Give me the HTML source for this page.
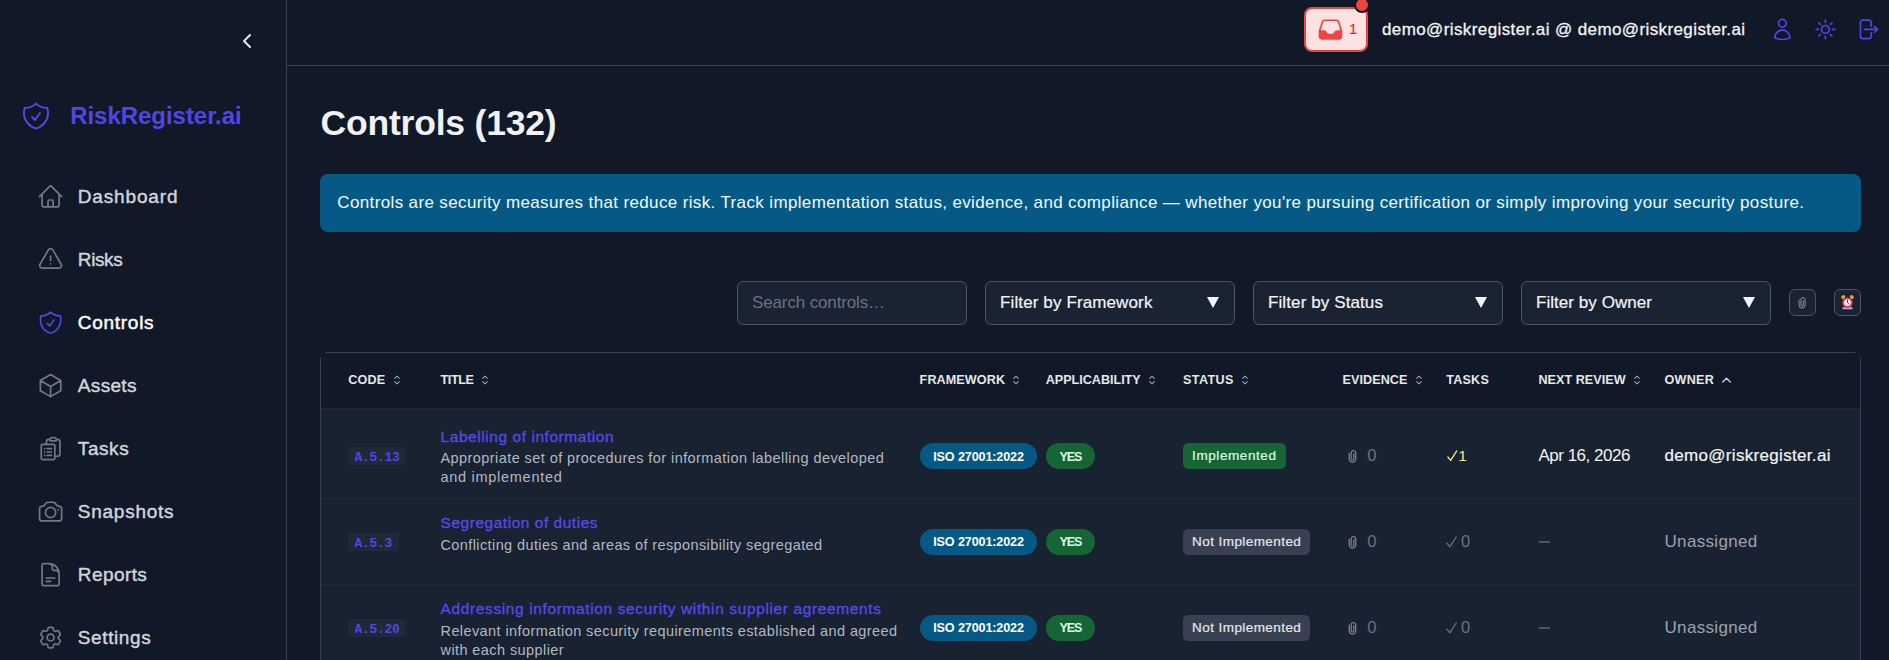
<!DOCTYPE html>
<html lang="en">
<head>
<meta charset="utf-8">
<title>Controls - RiskRegister.ai</title>
<style>
*{box-sizing:border-box;margin:0;padding:0}
html,body{width:1889px;height:660px;overflow:hidden;background:#111827}
body{position:relative;font-family:"Liberation Sans",sans-serif;color:#f3f4f6}
.a{position:absolute;white-space:pre;line-height:1;display:block}
svg{display:block;overflow:visible}
.ico{position:absolute;fill:none;stroke-linecap:round;stroke-linejoin:round}
#side{position:absolute;left:0;top:0;width:287px;height:660px;border-right:1px solid #374151}
#top{position:absolute;left:287px;top:0;width:1602px;height:66px;border-bottom:1px solid #374151}
#inbox{position:absolute;left:1304px;top:7px;width:64px;height:45px;border:2px solid #ef4444;border-radius:8px;background:#fee2e2}
#dot{position:absolute;left:1353.5px;top:-2.8px;width:16px;height:16px;border-radius:50%;background:#ef4444;border:2px solid #111827}
#banner{position:absolute;left:320px;top:174px;width:1541px;height:58px;border-radius:8px;background:#075985}
.inp{position:absolute;top:281px;height:44px;border:1px solid #4b5563;border-radius:6px;background:#192331}
.inp i{position:absolute;right:14.6px;top:15.3px;width:0;height:0;border-left:6.2px solid transparent;border-right:6.2px solid transparent;border-top:11.6px solid #f3f4f6}
.sbtn{position:absolute;top:289px;width:27px;height:27px;border:1px solid #4b5563;border-radius:6px;background:#192331}
#rows{position:absolute;left:321px;top:408px;width:1539px;height:260px;background:#182231}
.bl{position:absolute;background:#374151}
.sep{position:absolute;left:321px;width:1539px;height:1px;background:#202a3a}
.srt{position:absolute;top:375.2px;width:6px;height:10px;fill:none;stroke:#9ca3af;stroke-width:1.1;stroke-linecap:round;stroke-linejoin:round}
.code{position:absolute;left:348.3px;height:18.6px;border-radius:4px;background:#1f2937}
.pill{position:absolute;height:26px;border-radius:13px}
.iso{left:919.6px;width:117.4px;background:#075985}
.yes{left:1045.7px;width:49.5px;background:#166534}
.st{position:absolute;left:1183px;height:26.2px;border-radius:5.5px}
.st.imp{background:#166534}
.st.not{background:#374151}
</style>
</head>
<body>
<div id="side"></div><div id="top"></div>
<svg class="ico" style="left:235.40px;top:29.30px;width:24px;height:24px;stroke:#e5e7eb;stroke-width:2" viewBox="0 0 24 24"><path d="M15 18l-6-6 6-6"/></svg>
<svg class="ico" style="left:20.00px;top:99.90px;width:32px;height:32px;stroke:#4f46e5;stroke-width:1.5" viewBox="0 0 24 24"><path d="M9 12.75L11.25 15 15 9.75m-3-7.036A11.959 11.959 0 013.598 6 11.99 11.99 0 003 9.749c0 5.592 3.824 10.29 9 11.623 5.176-1.332 9-6.03 9-11.622 0-1.31-.21-2.571-.598-3.751h-.152c-3.196 0-6.1-1.248-8.25-3.285z"/></svg>
<span class="a" style="left:70.20px;top:104.00px;font-size:24px;color:#4f46e5;font-weight:700;letter-spacing:-0.040px;">RiskRegister.ai</span>
<svg class="ico" style="left:36.90px;top:182.70px;width:27.2px;height:27.2px;stroke:#717888;stroke-width:1.5" viewBox="0 0 24 24"><path d="M2.25 12l8.954-8.955c.44-.439 1.152-.439 1.591 0L21.75 12M4.5 9.75v10.125c0 .621.504 1.125 1.125 1.125H9.75v-4.875c0-.621.504-1.125 1.125-1.125h2.25c.621 0 1.125.504 1.125 1.125V21h4.125c.621 0 1.125-.504 1.125-1.125V9.75M8.25 21h8.25"/></svg>
<span class="a" style="left:77.80px;top:187.00px;font-size:19px;color:#d1d5db;letter-spacing:0.839px;-webkit-text-stroke:0.42px #d1d5db;">Dashboard</span>
<svg class="ico" style="left:36.90px;top:245.70px;width:27.2px;height:27.2px;stroke:#717888;stroke-width:1.5" viewBox="0 0 24 24"><path d="M12 9v3.75m-9.303 3.376c-.866 1.5.217 3.374 1.948 3.374h14.71c1.73 0 2.813-1.874 1.948-3.374L13.949 3.378c-.866-1.5-3.032-1.5-3.898 0L2.697 16.126zM12 15.75h.007v.008H12v-.008z"/></svg>
<span class="a" style="left:77.80px;top:250.00px;font-size:19px;color:#d1d5db;letter-spacing:-0.391px;-webkit-text-stroke:0.42px #d1d5db;">Risks</span>
<svg class="ico" style="left:36.90px;top:308.70px;width:27.2px;height:27.2px;stroke:#4f46e5;stroke-width:1.5" viewBox="0 0 24 24"><path d="M9 12.75L11.25 15 15 9.75m-3-7.036A11.959 11.959 0 013.598 6 11.99 11.99 0 003 9.749c0 5.592 3.824 10.29 9 11.623 5.176-1.332 9-6.03 9-11.622 0-1.31-.21-2.571-.598-3.751h-.152c-3.196 0-6.1-1.248-8.25-3.285z"/></svg>
<span class="a" style="left:77.80px;top:313.00px;font-size:19px;color:#f9fafb;letter-spacing:0.719px;-webkit-text-stroke:0.5px #f9fafb;">Controls</span>
<svg class="ico" style="left:36.90px;top:371.70px;width:27.2px;height:27.2px;stroke:#717888;stroke-width:1.5" viewBox="0 0 24 24"><path d="M21 7.5l-9-5.25L3 7.5m18 0l-9 5.25m9-5.25v9l-9 5.25M3 7.5l9 5.25M3 7.5v9l9 5.25m0-9v9"/></svg>
<span class="a" style="left:77.80px;top:376.00px;font-size:19px;color:#d1d5db;letter-spacing:0.328px;-webkit-text-stroke:0.42px #d1d5db;">Assets</span>
<svg class="ico" style="left:36.90px;top:434.70px;width:27.2px;height:27.2px;stroke:#717888;stroke-width:1.5" viewBox="0 0 24 24"><path d="M9 12h3.75M9 15h3.75M9 18h3.75m3 .75H18a2.25 2.25 0 002.25-2.25V6.108c0-1.135-.845-2.098-1.976-2.192a48.424 48.424 0 00-1.123-.08m-5.801 0c-.065.21-.1.433-.1.664 0 .414.336.75.75.75h4.5a.75.75 0 00.75-.75 2.25 2.25 0 00-.1-.664m-5.8 0A2.251 2.251 0 0113.5 2.25H15c1.012 0 1.867.668 2.15 1.586m-5.8 0c-.376.023-.75.05-1.124.08C9.095 4.01 8.25 4.973 8.25 6.108V8.25m0 0H4.875c-.621 0-1.125.504-1.125 1.125v11.25c0 .621.504 1.125 1.125 1.125h9.75c.621 0 1.125-.504 1.125-1.125V9.375c0-.621-.504-1.125-1.125-1.125H8.25zM6.75 12h.008v.008H6.75V12zm0 3h.008v.008H6.75V15zm0 3h.008v.008H6.75V18z"/></svg>
<span class="a" style="left:77.80px;top:439.00px;font-size:19px;color:#d1d5db;letter-spacing:0.584px;-webkit-text-stroke:0.42px #d1d5db;">Tasks</span>
<svg class="ico" style="left:36.90px;top:497.70px;width:27.2px;height:27.2px;stroke:#717888;stroke-width:1.5" viewBox="0 0 24 24"><path d="M6.827 6.175A2.31 2.31 0 015.186 7.23c-.38.054-.757.112-1.134.175C2.999 7.58 2.25 8.507 2.25 9.574V18a2.25 2.25 0 002.25 2.25h15A2.25 2.25 0 0021.75 18V9.574c0-1.067-.75-1.994-1.802-2.169a47.865 47.865 0 00-1.134-.175 2.31 2.31 0 01-1.64-1.055l-.822-1.316a2.192 2.192 0 00-1.736-1.039 48.774 48.774 0 00-5.232 0 2.192 2.192 0 00-1.736 1.039l-.821 1.316z M16.5 12.75a4.5 4.5 0 11-9 0 4.5 4.5 0 019 0zM18.75 10.5h.008v.008h-.008V10.5z"/></svg>
<span class="a" style="left:77.80px;top:502.00px;font-size:19px;color:#d1d5db;letter-spacing:0.745px;-webkit-text-stroke:0.42px #d1d5db;">Snapshots</span>
<svg class="ico" style="left:36.90px;top:560.70px;width:27.2px;height:27.2px;stroke:#717888;stroke-width:1.5" viewBox="0 0 24 24"><path d="M19.5 14.25v-2.625a3.375 3.375 0 00-3.375-3.375h-1.5A1.125 1.125 0 0113.5 7.125v-1.5a3.375 3.375 0 00-3.375-3.375H8.25m0 12.75h7.5m-7.5 3H12M10.5 2.25H5.625c-.621 0-1.125.504-1.125 1.125v17.25c0 .621.504 1.125 1.125 1.125h12.75c.621 0 1.125-.504 1.125-1.125V11.25a9 9 0 00-9-9z"/></svg>
<span class="a" style="left:77.80px;top:565.00px;font-size:19px;color:#d1d5db;letter-spacing:0.424px;-webkit-text-stroke:0.42px #d1d5db;">Reports</span>
<svg class="ico" style="left:36.90px;top:623.70px;width:27.2px;height:27.2px;stroke:#717888;stroke-width:1.5" viewBox="0 0 24 24"><path d="M9.594 3.94c.09-.542.56-.94 1.11-.94h2.593c.55 0 1.02.398 1.11.94l.213 1.281c.063.374.313.686.645.87.074.04.147.083.22.127.324.196.72.257 1.075.124l1.217-.456a1.125 1.125 0 011.37.49l1.296 2.247a1.125 1.125 0 01-.26 1.431l-1.003.827c-.293.24-.438.613-.431.992a6.759 6.759 0 010 .255c-.007.378.138.75.43.99l1.005.828c.424.35.534.954.26 1.43l-1.298 2.247a1.125 1.125 0 01-1.369.491l-1.217-.456c-.355-.133-.75-.072-1.076.124a6.57 6.57 0 01-.22.128c-.331.183-.581.495-.644.869l-.213 1.28c-.09.543-.56.941-1.11.941h-2.594c-.55 0-1.02-.398-1.11-.94l-.213-1.281c-.062-.374-.312-.686-.644-.87a6.52 6.52 0 01-.22-.127c-.325-.196-.72-.257-1.076-.124l-1.217.456a1.125 1.125 0 01-1.369-.49l-1.297-2.247a1.125 1.125 0 01.26-1.431l1.004-.827c.292-.24.437-.613.43-.992a6.932 6.932 0 010-.255c.007-.378-.138-.75-.43-.99l-1.004-.828a1.125 1.125 0 01-.26-1.43l1.297-2.247a1.125 1.125 0 011.37-.491l1.216.456c.356.133.751.072 1.076-.124.072-.044.146-.087.22-.128.332-.183.582-.495.644-.869l.214-1.281z M15 12a3 3 0 11-6 0 3 3 0 016 0z"/></svg>
<span class="a" style="left:77.80px;top:628.00px;font-size:19px;color:#d1d5db;letter-spacing:0.605px;-webkit-text-stroke:0.42px #d1d5db;">Settings</span>
<div id="inbox"></div><div id="dot"></div>
<svg class="ico" style="left:1317px;top:15.9px;width:27px;height:27px;fill:#ef4444;stroke:none" viewBox="0 0 24 24"><path fill-rule="evenodd" clip-rule="evenodd" d="M6.912 3a3 3 0 00-2.868 2.118l-2.411 7.838a3 3 0 00-.133.882V18a3 3 0 003 3h15a3 3 0 003-3v-4.162c0-.299-.045-.596-.133-.882l-2.412-7.838A3 3 0 0017.088 3H6.912zm13.823 9.75l-2.213-7.191A1.5 1.5 0 0017.088 4.5H6.912a1.5 1.5 0 00-1.434 1.059L3.265 12.75H6.11a3 3 0 012.684 1.658l.256.513a1.5 1.5 0 001.342.829h3.218a1.5 1.5 0 001.342-.83l.256-.512a3 3 0 012.684-1.658h2.844z"/></svg>
<span class="a" style="left:1349.30px;top:22.00px;font-size:14px;color:#dc2626;letter-spacing:-1.297px;-webkit-text-stroke:0.2px #dc2626;">1</span>
<span class="a" style="left:1382.00px;top:21.00px;font-size:17px;color:#f3f4f6;letter-spacing:0.394px;-webkit-text-stroke:0.3px #f3f4f6;">demo@riskregister.ai @ demo@riskregister.ai</span>
<svg class="ico" style="left:1770.00px;top:16.70px;width:24.8px;height:24.8px;stroke:#4f46e5;stroke-width:1.6" viewBox="0 0 24 24"><path d="M15.75 6a3.75 3.75 0 11-7.5 0 3.75 3.75 0 017.5 0zM4.501 20.118a7.5 7.5 0 0114.998 0A17.933 17.933 0 0112 21.75c-2.676 0-5.216-.584-7.499-1.632z"/></svg>
<svg class="ico" style="left:1812.70px;top:16.80px;width:24.8px;height:24.8px;stroke:#4f46e5;stroke-width:1.6" viewBox="0 0 24 24"><path d="M12 3v2.25m6.364.386l-1.591 1.591M21 12h-2.25m-.386 6.364l-1.591-1.591M12 18.75V21m-4.773-4.227l-1.591 1.591M5.25 12H3m4.227-4.773L5.636 5.636M15.75 12a3.75 3.75 0 11-7.5 0 3.75 3.75 0 017.5 0z"/></svg>
<svg class="ico" style="left:1855.40px;top:16.80px;width:24.8px;height:24.8px;stroke:#4f46e5;stroke-width:1.6" viewBox="0 0 24 24"><path d="M15.75 9V5.25A2.25 2.25 0 0013.5 3h-6a2.25 2.25 0 00-2.25 2.25v13.5A2.25 2.25 0 007.5 21h6a2.25 2.25 0 002.25-2.25V15m3 0l3-3m0 0l-3-3m3 3H9"/></svg>
<span class="a" style="left:320.50px;top:106.00px;font-size:35.5px;color:#eff1f4;font-weight:700;letter-spacing:-0.191px;">Controls (132)</span>
<div id="banner"></div>
<span class="a" style="left:337.30px;top:194.00px;font-size:17px;color:#f0f9ff;letter-spacing:0.364px;">Controls are security measures that reduce risk. Track implementation status, evidence, and compliance — whether you&#x27;re pursuing certification or simply improving your security posture.</span>
<div class="inp" style="left:737px;width:230px"></div>
<span class="a" style="left:752.00px;top:294.00px;font-size:17px;color:#6b7280;letter-spacing:-0.133px;">Search controls…</span>
<div class="inp" style="left:985px;width:250px"><i></i></div>
<span class="a" style="left:1000.00px;top:294.00px;font-size:17px;color:#f3f4f6;letter-spacing:0.122px;-webkit-text-stroke:0.2px #f3f4f6;">Filter by Framework</span>
<div class="inp" style="left:1253px;width:250px"><i></i></div>
<span class="a" style="left:1268.00px;top:294.00px;font-size:17px;color:#f3f4f6;letter-spacing:0.102px;-webkit-text-stroke:0.2px #f3f4f6;">Filter by Status</span>
<div class="inp" style="left:1521px;width:250px"><i></i></div>
<span class="a" style="left:1536.00px;top:294.00px;font-size:17px;color:#f3f4f6;letter-spacing:0.050px;-webkit-text-stroke:0.2px #f3f4f6;">Filter by Owner</span>
<div class="sbtn" style="left:1789px"></div><div class="sbtn" style="left:1834px"></div>
<svg class="ico" style="left:1798.4px;top:295.6px;width:8.2px;height:13.4px;stroke:#c3c4cb;stroke-width:.85" viewBox="0 0 10 16"><path d="M1.3 4.6V11a3.7 3.7 0 007.4 0V4.3a2.6 2.6 0 00-5.2 0v6.5a1.5 1.5 0 003 0V5.2"/><circle cx="2.6" cy="4.4" r=".75" fill="#7a3b2e" stroke="none"/><circle cx="6.3" cy="5" r=".75" fill="#7a3b2e" stroke="none"/></svg>
<svg class="ico" style="left:1841.4px;top:294.8px;width:13px;height:14.4px;stroke:none" viewBox="0 0 13 14.4"><ellipse cx="2.2" cy="2" rx="2.1" ry="1.7" fill="#f5a524" transform="rotate(-35 2.2 2)"/><ellipse cx="10.8" cy="2" rx="2.1" ry="1.7" fill="#f5a524" transform="rotate(35 10.8 2)"/><rect x="1.3" y="12.2" width="10.4" height="2" rx="1" fill="#c6a4e0"/><circle cx="6.5" cy="7.6" r="5.2" fill="#ef3a63"/><circle cx="6.5" cy="7.6" r="3.4" fill="#fdf4f6"/><path d="M6.5 5.3V7.7L7.9 9" fill="none" stroke="#6b2338" stroke-width="1" stroke-linecap="round" stroke-linejoin="round"/></svg>
<div id="rows"></div>
<div class="bl" style="left:326px;top:352px;width:1529px;height:1px"></div><div class="bl" style="left:325px;top:352px;width:1531px;height:1px;opacity:.45"></div><div class="bl" style="left:320px;top:358px;width:1px;height:310px"></div><div class="bl" style="left:1860px;top:358px;width:1px;height:310px"></div><div class="bl" style="left:320px;top:357px;width:1px;height:1px;opacity:.5"></div><div class="bl" style="left:1860px;top:357px;width:1px;height:1px;opacity:.5"></div>
<div class="sep" style="top:408px"></div><div class="sep" style="top:498px"></div><div class="sep" style="top:584px"></div>
<span class="a" style="left:348.20px;top:374.00px;font-size:12.6px;color:#e5e7eb;font-weight:700;letter-spacing:0.202px;">CODE</span>
<svg class="srt" style="left:393.6px" viewBox="0 0 6 10"><path d="M.7 3.4L3 1.1l2.3 2.3M.7 6.6L3 8.9l2.3-2.3"/></svg>
<span class="a" style="left:440.50px;top:374.00px;font-size:12.6px;color:#e5e7eb;font-weight:700;letter-spacing:-0.397px;">TITLE</span>
<svg class="srt" style="left:481.7px" viewBox="0 0 6 10"><path d="M.7 3.4L3 1.1l2.3 2.3M.7 6.6L3 8.9l2.3-2.3"/></svg>
<span class="a" style="left:919.60px;top:374.00px;font-size:12.6px;color:#e5e7eb;font-weight:700;letter-spacing:0.094px;">FRAMEWORK</span>
<svg class="srt" style="left:1013.3px" viewBox="0 0 6 10"><path d="M.7 3.4L3 1.1l2.3 2.3M.7 6.6L3 8.9l2.3-2.3"/></svg>
<span class="a" style="left:1045.70px;top:374.00px;font-size:12.6px;color:#e5e7eb;font-weight:700;letter-spacing:-0.012px;">APPLICABILITY</span>
<svg class="srt" style="left:1148.9px" viewBox="0 0 6 10"><path d="M.7 3.4L3 1.1l2.3 2.3M.7 6.6L3 8.9l2.3-2.3"/></svg>
<span class="a" style="left:1182.90px;top:374.00px;font-size:12.6px;color:#e5e7eb;font-weight:700;letter-spacing:0.414px;">STATUS</span>
<svg class="srt" style="left:1242.1px" viewBox="0 0 6 10"><path d="M.7 3.4L3 1.1l2.3 2.3M.7 6.6L3 8.9l2.3-2.3"/></svg>
<span class="a" style="left:1342.50px;top:374.00px;font-size:12.6px;color:#e5e7eb;font-weight:700;letter-spacing:0.076px;">EVIDENCE</span>
<svg class="srt" style="left:1415.7px" viewBox="0 0 6 10"><path d="M.7 3.4L3 1.1l2.3 2.3M.7 6.6L3 8.9l2.3-2.3"/></svg>
<span class="a" style="left:1446.30px;top:374.00px;font-size:12.6px;color:#e5e7eb;font-weight:700;letter-spacing:0.190px;">TASKS</span>
<span class="a" style="left:1538.40px;top:374.00px;font-size:12.6px;color:#e5e7eb;font-weight:700;letter-spacing:0.047px;">NEXT REVIEW</span>
<svg class="srt" style="left:1633.9px" viewBox="0 0 6 10"><path d="M.7 3.4L3 1.1l2.3 2.3M.7 6.6L3 8.9l2.3-2.3"/></svg>
<span class="a" style="left:1664.50px;top:374.00px;font-size:12.6px;color:#e5e7eb;font-weight:700;letter-spacing:0.244px;">OWNER</span>
<svg class="srt" style="left:1721.7px;top:377px;width:9px;height:6px;stroke:#d1d5db;stroke-width:1.3" viewBox="0 0 9 6"><path d="M.7 5L4.5 1.2 8.3 5"/></svg>
<div class="code" style="top:446.9px;width:58.0px"></div>
<span class="a" style="left:354.60px;top:451.00px;font-size:13px;color:#5046e5;font-weight:700;font-family:'Liberation Mono',monospace;letter-spacing:-0.302px;">A.5.13</span>
<span class="a" style="left:440.60px;top:429.00px;font-size:15.5px;color:#544aea;letter-spacing:0.555px;-webkit-text-stroke:0.3px #544aea;">Labelling of information</span>
<span class="a" style="left:440.50px;top:451.00px;font-size:14.5px;color:#b3b8c1;letter-spacing:0.427px;">Appropriate set of procedures for information labelling developed</span>
<span class="a" style="left:440.50px;top:470.00px;font-size:14.5px;color:#b3b8c1;letter-spacing:0.717px;">and implemented</span>
<div class="pill iso" style="top:443.2px"></div>
<span class="a" style="left:933.20px;top:451.00px;font-size:12.6px;color:#ffffff;font-weight:700;letter-spacing:-0.124px;">ISO 27001:2022</span>
<div class="pill yes" style="top:443.2px"></div>
<span class="a" style="left:1059.40px;top:451.00px;font-size:12.6px;color:#dcfce7;font-weight:700;letter-spacing:-1.068px;">YES</span>
<div class="st imp" style="top:443.0px;width:103.2px"></div>
<span class="a" style="left:1192.10px;top:449.00px;font-size:13.5px;color:#dcfce7;letter-spacing:0.578px;-webkit-text-stroke:0.2px #dcfce7;">Implemented</span>
<svg class="ico" style="left:1347.8px;top:448.9px;width:9px;height:14.4px;stroke:#c3c4cb;stroke-width:.85" viewBox="0 0 10 16"><path d="M1.3 4.6V11a3.7 3.7 0 007.4 0V4.3a2.6 2.6 0 00-5.2 0v6.5a1.5 1.5 0 003 0V5.2"/><circle cx="2.6" cy="4.4" r=".75" fill="#7a3b2e" stroke="none"/><circle cx="6.3" cy="5" r=".75" fill="#7a3b2e" stroke="none"/></svg>
<span class="a" style="left:1367.20px;top:447.00px;font-size:16.5px;color:#6b7280;letter-spacing:-0.588px;">0</span>
<svg class="ico" style="left:1446.8px;top:449.8px;width:10.5px;height:11.5px;stroke:#fde68a;stroke-width:1.4" viewBox="0 0 11 12"><path d="M.9 7.2l2.9 3.6L10.2 1"/></svg>
<span class="a" style="left:1458.20px;top:448.00px;font-size:15.5px;color:#fde68a;letter-spacing:-1.125px;">1</span>
<span class="a" style="left:1538.40px;top:447.00px;font-size:17px;color:#f3f4f6;letter-spacing:-0.480px;">Apr 16, 2026</span>
<span class="a" style="left:1664.50px;top:447.00px;font-size:17px;color:#f3f4f6;letter-spacing:0.318px;-webkit-text-stroke:0.2px #f3f4f6;">demo@riskregister.ai</span>
<div class="code" style="top:532.7px;width:50.5px"></div>
<span class="a" style="left:354.60px;top:537.00px;font-size:13px;color:#5046e5;font-weight:700;font-family:'Liberation Mono',monospace;letter-spacing:-0.303px;">A.5.3</span>
<span class="a" style="left:440.60px;top:515.00px;font-size:15.5px;color:#544aea;letter-spacing:0.524px;-webkit-text-stroke:0.3px #544aea;">Segregation of duties</span>
<span class="a" style="left:440.50px;top:538.00px;font-size:14.5px;color:#b3b8c1;letter-spacing:0.395px;">Conflicting duties and areas of responsibility segregated</span>
<div class="pill iso" style="top:529.0px"></div>
<span class="a" style="left:933.20px;top:536.00px;font-size:12.6px;color:#ffffff;font-weight:700;letter-spacing:-0.124px;">ISO 27001:2022</span>
<div class="pill yes" style="top:529.0px"></div>
<span class="a" style="left:1059.40px;top:536.00px;font-size:12.6px;color:#dcfce7;font-weight:700;letter-spacing:-1.068px;">YES</span>
<div class="st not" style="top:528.8px;width:127px"></div>
<span class="a" style="left:1192.10px;top:535.00px;font-size:13.5px;color:#e5e7eb;letter-spacing:0.426px;-webkit-text-stroke:0.2px #e5e7eb;">Not Implemented</span>
<svg class="ico" style="left:1347.8px;top:534.7px;width:9px;height:14.4px;stroke:#c3c4cb;stroke-width:.85" viewBox="0 0 10 16"><path d="M1.3 4.6V11a3.7 3.7 0 007.4 0V4.3a2.6 2.6 0 00-5.2 0v6.5a1.5 1.5 0 003 0V5.2"/><circle cx="2.6" cy="4.4" r=".75" fill="#7a3b2e" stroke="none"/><circle cx="6.3" cy="5" r=".75" fill="#7a3b2e" stroke="none"/></svg>
<span class="a" style="left:1367.20px;top:533.00px;font-size:16.5px;color:#6b7280;letter-spacing:-0.588px;">0</span>
<svg class="ico" style="left:1446.3px;top:535.6px;width:11px;height:12px;stroke:#6b7280;stroke-width:1.3" viewBox="0 0 11 12"><path d="M.9 7.2l2.9 3.6L10.2 1"/></svg>
<span class="a" style="left:1461.00px;top:533.00px;font-size:16.5px;color:#6b7280;letter-spacing:-0.588px;">0</span>
<div style="position:absolute;left:1539px;top:541.4px;width:11px;height:1.3px;background:#4b5563"></div>
<span class="a" style="left:1664.50px;top:533.00px;font-size:17px;color:#9ca3af;letter-spacing:0.322px;">Unassigned</span>
<div class="code" style="top:618.6px;width:58.0px"></div>
<span class="a" style="left:354.60px;top:623.00px;font-size:13px;color:#5046e5;font-weight:700;font-family:'Liberation Mono',monospace;letter-spacing:-0.302px;">A.5.20</span>
<span class="a" style="left:440.60px;top:601.00px;font-size:15.5px;color:#544aea;letter-spacing:0.622px;-webkit-text-stroke:0.3px #544aea;">Addressing information security within supplier agreements</span>
<span class="a" style="left:440.50px;top:624.00px;font-size:14.5px;color:#b3b8c1;letter-spacing:0.409px;">Relevant information security requirements established and agreed</span>
<span class="a" style="left:440.50px;top:643.00px;font-size:14.5px;color:#b3b8c1;letter-spacing:0.412px;">with each supplier</span>
<div class="pill iso" style="top:614.9px"></div>
<span class="a" style="left:933.20px;top:622.00px;font-size:12.6px;color:#ffffff;font-weight:700;letter-spacing:-0.124px;">ISO 27001:2022</span>
<div class="pill yes" style="top:614.9px"></div>
<span class="a" style="left:1059.40px;top:622.00px;font-size:12.6px;color:#dcfce7;font-weight:700;letter-spacing:-1.068px;">YES</span>
<div class="st not" style="top:614.7px;width:127px"></div>
<span class="a" style="left:1192.10px;top:621.00px;font-size:13.5px;color:#e5e7eb;letter-spacing:0.426px;-webkit-text-stroke:0.2px #e5e7eb;">Not Implemented</span>
<svg class="ico" style="left:1347.8px;top:620.6px;width:9px;height:14.4px;stroke:#c3c4cb;stroke-width:.85" viewBox="0 0 10 16"><path d="M1.3 4.6V11a3.7 3.7 0 007.4 0V4.3a2.6 2.6 0 00-5.2 0v6.5a1.5 1.5 0 003 0V5.2"/><circle cx="2.6" cy="4.4" r=".75" fill="#7a3b2e" stroke="none"/><circle cx="6.3" cy="5" r=".75" fill="#7a3b2e" stroke="none"/></svg>
<span class="a" style="left:1367.20px;top:619.00px;font-size:16.5px;color:#6b7280;letter-spacing:-0.588px;">0</span>
<svg class="ico" style="left:1446.3px;top:621.5px;width:11px;height:12px;stroke:#6b7280;stroke-width:1.3" viewBox="0 0 11 12"><path d="M.9 7.2l2.9 3.6L10.2 1"/></svg>
<span class="a" style="left:1461.00px;top:619.00px;font-size:16.5px;color:#6b7280;letter-spacing:-0.588px;">0</span>
<div style="position:absolute;left:1539px;top:627.3px;width:11px;height:1.3px;background:#4b5563"></div>
<span class="a" style="left:1664.50px;top:619.00px;font-size:17px;color:#9ca3af;letter-spacing:0.322px;">Unassigned</span>
</body>
</html>
